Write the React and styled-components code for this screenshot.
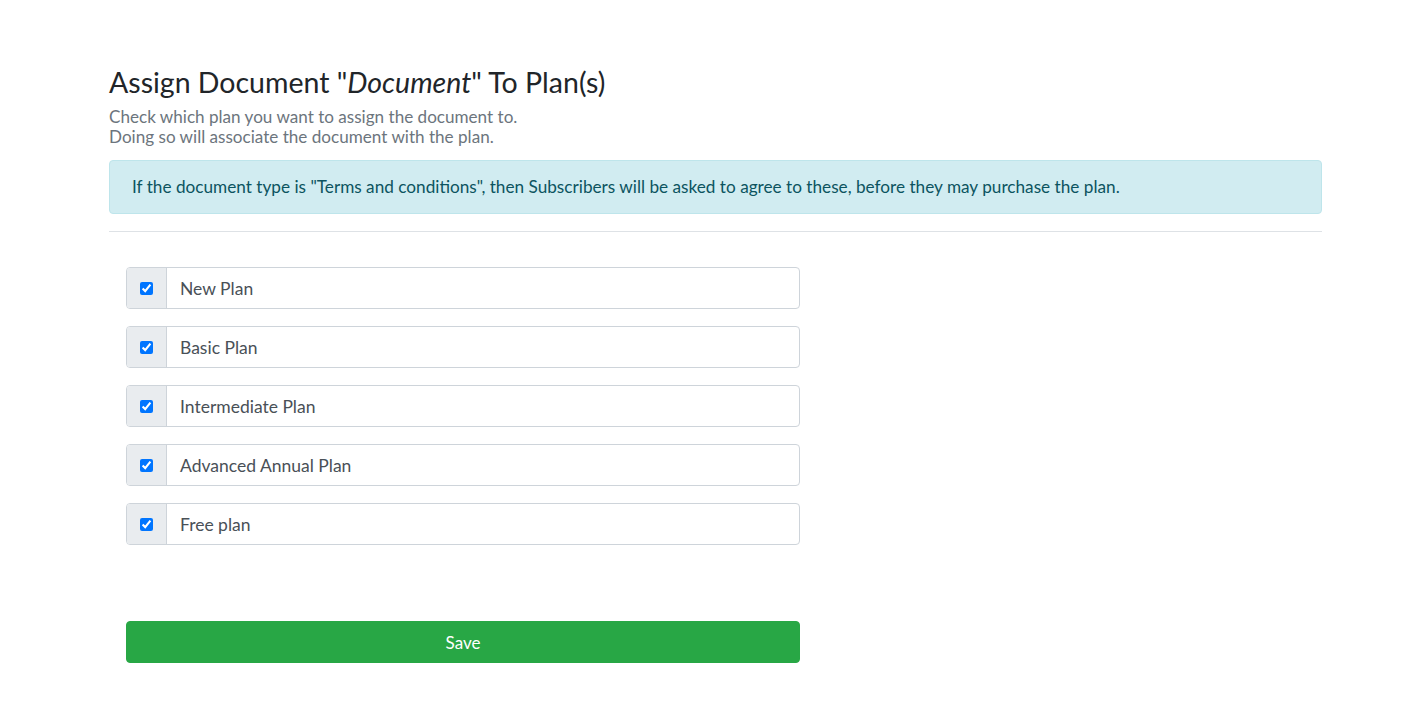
import styled, { createGlobalStyle } from "styled-components";

const GlobalStyle = createGlobalStyle`
  *, *::before, *::after {
    box-sizing: border-box;
  }
  body {
    margin: 0;
    background: #fff;
    font-family: Lato, "Liberation Sans", sans-serif;
    color: #212529;
  }
`;

const Page = styled.div`
  padding: 64px 94px 40px 109px;
`;

const Title = styled.h1`
  margin: 0 0 7px;
  font-size: 28.5px;
  font-weight: 400;
  line-height: 36px;
  color: #212529;
  em {
    font-style: italic;
  }
`;

const Lead = styled.p`
  margin: 0 0 13px;
  font-size: 17.1px;
  line-height: 20px;
  color: #6c757d;
`;

const Alert = styled.div`
  padding: 14px 22px;
  font-size: 17.2px;
  line-height: 24px;
  color: #0c5460;
  background: #d1ecf1;
  border: 1px solid #bee5eb;
  border-radius: 4px;
`;

const Divider = styled.hr`
  margin: 17px 0 35px;
  border: 0;
  border-top: 1px solid #dee2e6;
`;

const Form = styled.form`
  width: 674px;
  margin-left: 17px;
  display: flex;
  flex-direction: column;
`;

const PlanList = styled.div`
  display: flex;
  flex-direction: column;
  gap: 17px;
`;

const Row = styled.label`
  display: flex;
  height: 42px;
  border: 1px solid #ced4da;
  border-radius: 4px;
  overflow: hidden;
`;

const Prepend = styled.span`
  width: 40px;
  display: flex;
  align-items: center;
  justify-content: center;
  background: #e9ecef;
  border-right: 1px solid #ced4da;
  input {
    margin: 0;
    width: 13px;
    height: 13px;
    accent-color: #0075ff;
  }
`;

const PlanName = styled.span`
  flex: 1;
  display: flex;
  align-items: center;
  padding: 0 13px;
  font-size: 17.5px;
  color: #495057;
`;

const SaveButton = styled.button`
  margin-top: 76px;
  height: 42px;
  border: 1px solid #28a745;
  border-radius: 4px;
  background: #28a745;
  color: #fff;
  font-family: Lato, "Liberation Sans", sans-serif;
  font-size: 17px;
  cursor: pointer;
`;

const plans = [
  "New Plan",
  "Basic Plan",
  "Intermediate Plan",
  "Advanced Annual Plan",
  "Free plan",
];

export default function App() {
  return (
    <>
      <GlobalStyle />
      <Page>
        <Title>
          Assign Document "<em>Document</em>" To Plan(s)
        </Title>
        <Lead>
          Check which plan you want to assign the document to.
          <br />
          Doing so will associate the document with the plan.
        </Lead>
        <Alert>
          If the document type is "Terms and conditions", then Subscribers will
          be asked to agree to these, before they may purchase the plan.
        </Alert>
        <Divider />
        <Form onSubmit={(e) => e.preventDefault()}>
          <PlanList>
            {plans.map((name) => (
              <Row key={name}>
                <Prepend>
                  <input type="checkbox" defaultChecked />
                </Prepend>
                <PlanName>{name}</PlanName>
              </Row>
            ))}
          </PlanList>
          <SaveButton type="submit">Save</SaveButton>
        </Form>
      </Page>
    </>
  );
}
